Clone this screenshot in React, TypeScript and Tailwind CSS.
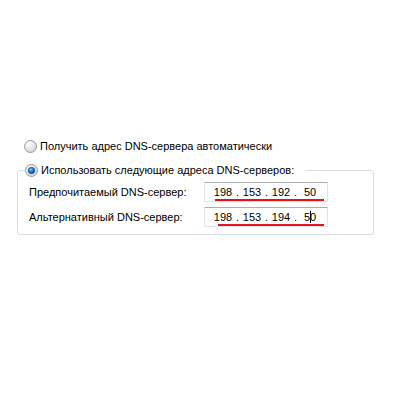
import React from "react";

function Radio({ checked }: { checked?: boolean }) {
  return (
    <svg width="13" height="13" viewBox="0 0 13 13" className="shrink-0">
      <defs>
        <radialGradient id={checked ? "rgOn" : "rgOff"} cx="35%" cy="30%" r="75%">
          <stop offset="0%" stopColor="#ffffff" />
          <stop offset="100%" stopColor="#d4d4d4" />
        </radialGradient>
        <radialGradient id="dot" cx="40%" cy="35%" r="70%">
          <stop offset="0%" stopColor="#7fc4f4" />
          <stop offset="55%" stopColor="#1a6fc6" />
          <stop offset="100%" stopColor="#0b3f80" />
        </radialGradient>
      </defs>
      <circle cx="6.5" cy="6.5" r="6" fill={`url(#${checked ? "rgOn" : "rgOff"})`} stroke="#979a9c" strokeWidth="1" />
      {checked && <circle cx="6.5" cy="6.5" r="3.3" fill="url(#dot)" stroke="#174d8a" strokeWidth="0.6" />}
    </svg>
  );
}

function IpField({ parts, caret, lineLeft }: { parts: string[]; caret?: boolean; lineLeft: number }) {
  return (
    <div className="relative w-[124px] h-[20px] border border-[#e2e3ea] border-t-[#abadb3] bg-white flex items-center pl-[6px]">
      {parts.map((p, i) => (
        <React.Fragment key={i}>
          {i > 0 && <span className="w-[5px] text-center">.</span>}
          <span className="w-[24px] text-center flex justify-center">
            {caret && i === parts.length - 1 ? (
              <>
                {p[0]}
                <span className="inline-block w-px h-[12px] bg-black mr-[-1px] self-center" />
                {p.slice(1)}
              </>
            ) : (
              p
            )}
          </span>
        </React.Fragment>
      ))}
      {/* red annotation underline */}
      <div
        className="absolute bottom-0 h-[2px] bg-[#e8121b]"
        style={{ left: lineLeft, width: 119 - lineLeft }}
      />
    </div>
  );
}

export default function App() {
  return (
    <div className="w-[406px] h-[401px] bg-white text-black text-[11px] leading-4 font-['Liberation_Sans',Arial,sans-serif] pt-[138px] pl-[17px]">
      <div className="flex items-center gap-[3px] h-4 pl-[7px]">
        <Radio />
        <span>Получить адрес DNS-сервера автоматически</span>
      </div>

      <fieldset className="mt-[8px] w-[357px] border border-[#d5dfe5] rounded-[3px] pl-[11px] pt-[4px] pb-[7px]">
        <legend className="ml-[-4px] pr-[11px]">
          <div className="flex items-center gap-[3px] h-4">
            <Radio checked />
            <span>Использовать следующие адреса DNS-серверов:</span>
          </div>
        </legend>
        <div className="flex flex-col gap-[5px]">
          <div className="flex items-center">
            <span className="w-[175px]">Предпочитаемый DNS-сервер:</span>
            <IpField parts={["198", "153", "192", "50"]} lineLeft={10} />
          </div>
          <div className="flex items-center">
            <span className="w-[175px]">Альтернативный DNS-сервер:</span>
            <IpField parts={["198", "153", "194", "50"]} caret lineLeft={13} />
          </div>
        </div>
      </fieldset>
    </div>
  );
}
